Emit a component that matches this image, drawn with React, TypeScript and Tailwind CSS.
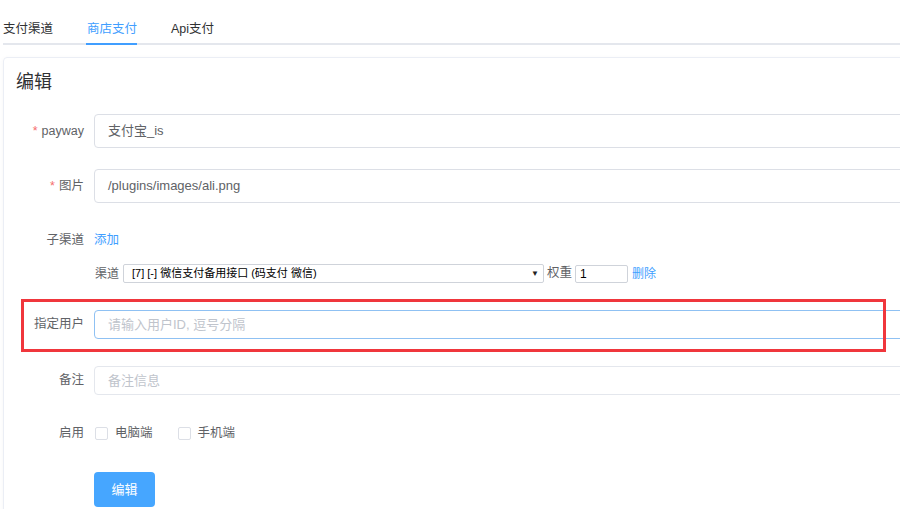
import React from 'react';

const font = { fontFamily: '"Liberation Sans", "Noto Sans CJK SC", sans-serif' };

const Label = ({ children, required }: { children: React.ReactNode; required?: boolean }) => (
  <div className="w-[80px] shrink-0 text-right text-[12.5px] text-[#606266]">
    {required && <span className="text-[#f56c6c] mr-[4px]">*</span>}
    {children}
  </div>
);

const Checkbox = ({ label }: { label: string }) => (
  <label className="flex items-center">
    <span className="w-[13px] h-[13px] border border-[#dcdfe6] rounded-[2px] bg-white" />
    <span className="ml-[7px] text-[12.5px] text-[#606266]">{label}</span>
  </label>
);

export default function App() {
  return (
    <div className="relative w-[900px] h-[509px] overflow-hidden bg-white" style={font}>
      {/* tabs */}
      <div className="ml-[3px] w-[1000px] h-[45px] flex items-end gap-[34px] border-b-2 border-[#e4e7ed]">
        <div className="h-[45px] pt-[17px] flex items-center text-[12.5px] text-[#303133]">支付渠道</div>
        <div className="relative h-[45px] pt-[17px] flex items-center text-[12.5px] text-[#409eff]">
          商店支付
          <span className="absolute left-[-1px] right-0 bottom-[-2px] h-[2px] bg-[#409eff]" />
        </div>
        <div className="h-[45px] pt-[17px] flex items-center text-[12.5px] text-[#303133]">Api支付</div>
      </div>

      {/* card */}
      <div className="mt-[12px] ml-[3px] w-[1000px] h-[480px] border border-[#ebeef5] rounded-[4px] shadow-[0_1px_4px_rgba(0,0,0,0.04)]">
        <h2 className="pt-[12px] pl-[12px] text-[18px] leading-[24px] text-[#303133]">编辑</h2>

        <div className="mt-[20px] flex items-center">
          <Label required>payway</Label>
          <div className="ml-[10px] w-[900px] h-[34px] flex items-center px-[13px] border border-[#dcdfe6] rounded-[4px] text-[13px] text-[#606266]">
            支付宝_is
          </div>
        </div>

        <div className="mt-[21px] flex items-center">
          <Label required>图片</Label>
          <div className="ml-[10px] w-[900px] h-[34px] flex items-center px-[13px] border border-[#dcdfe6] rounded-[4px] text-[13px] text-[#606266]">
            /plugins/images/ali.png
          </div>
        </div>

        <div className="mt-[27px] h-[20px] flex items-center">
          <Label>子渠道</Label>
          <span className="ml-[10px] text-[12.5px] text-[#409eff]">添加</span>
        </div>

        <div className="mt-[14px] ml-[91px] flex items-center">
          <span className="text-[12px] text-[#606266]">渠道</span>
          <div className="ml-[4px] w-[421px] h-[19px] flex items-center justify-between pl-[8px] pr-[4px] border border-[#cfd3da] rounded-[2px] text-[11px] text-black">
            <span>[7] [-] 微信支付备用接口 (码支付 微信)</span>
            <span className="text-[8px] text-[#222]">▼</span>
          </div>
          <span className="ml-[3px] text-[12.5px] text-[#606266]">权重</span>
          <div className="ml-[3px] w-[53px] h-[18px] flex items-center pl-[4px] border border-[#cfd3da] rounded-[2px] text-[12px] text-black">
            1
          </div>
          <span className="ml-[4px] text-[12px] text-[#409eff]">删除</span>
        </div>

        <div className="mt-[27px] flex items-center">
          <Label>指定用户</Label>
          <div className="ml-[10px] w-[900px] h-[29px] flex items-center px-[13px] border border-[#8fc1f3] rounded-[4px] text-[13px] text-[#c0c4cc]">
            请输入用户ID, 逗号分隔
          </div>
        </div>

        <div className="mt-[27px] flex items-center">
          <Label>备注</Label>
          <div className="ml-[10px] w-[900px] h-[29px] flex items-center px-[13px] border border-[#e4e7ed] rounded-[4px] text-[13px] text-[#c0c4cc]">
            备注信息
          </div>
        </div>

        <div className="mt-[29px] h-[18px] flex items-center">
          <Label>启用</Label>
          <div className="ml-[11px] flex items-center gap-[25px]">
            <Checkbox label="电脑端" />
            <Checkbox label="手机端" />
          </div>
        </div>

        <div className="mt-[30px] ml-[90px]">
          <button className="w-[61px] h-[35px] rounded-[4px] bg-[#46a6ff] text-[13px] text-white">编辑</button>
        </div>
      </div>

      {/* red annotation box */}
      <div className="absolute left-[21px] top-[299px] w-[865px] h-[53px] border-[3px] border-[#f0363c]" />
    </div>
  );
}
